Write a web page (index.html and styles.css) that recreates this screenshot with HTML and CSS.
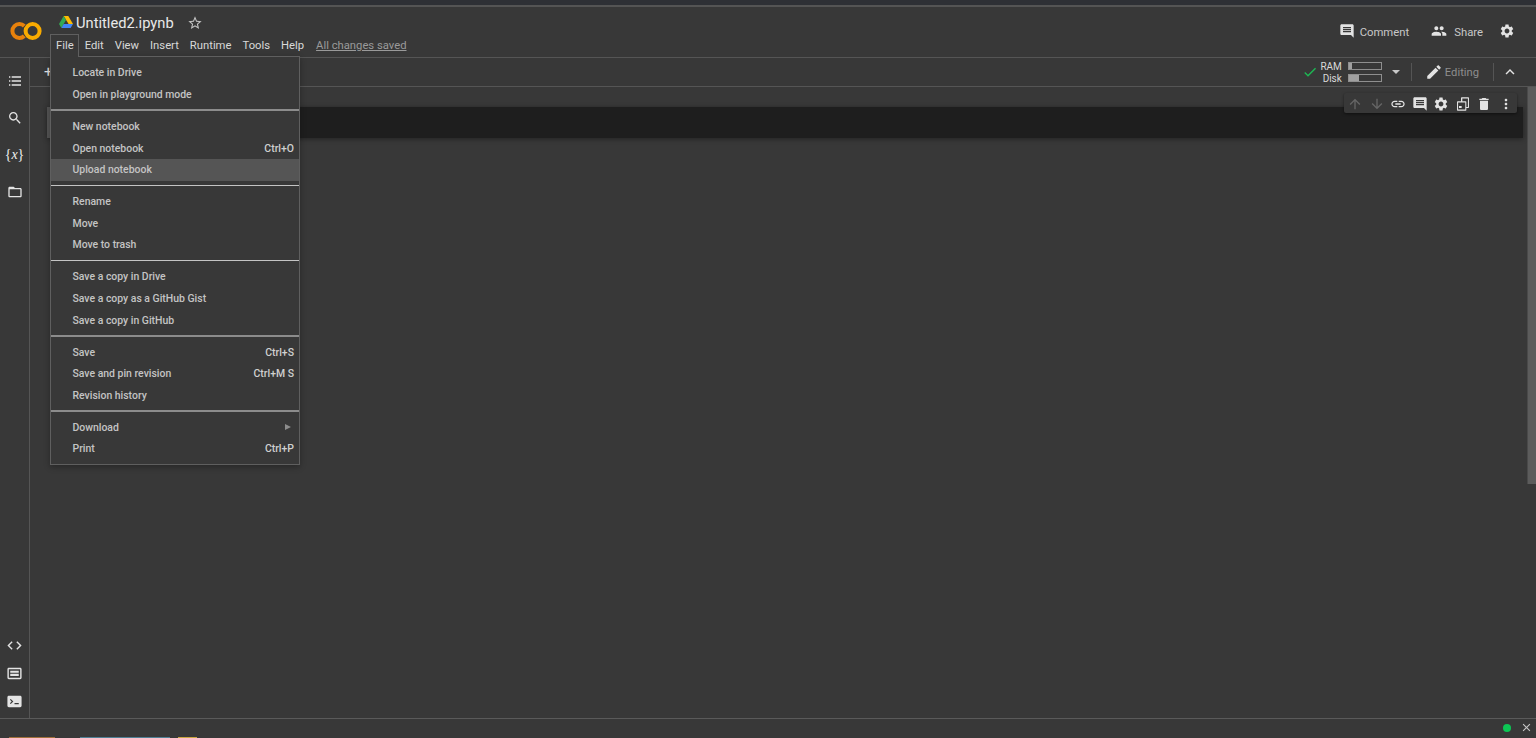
FILE: index.html
```html
<!DOCTYPE html>
<html lang="en">
<head>
    <meta charset="UTF-8">
    <meta name="viewport" content="width=device-width, initial-scale=1.0">
    <title>Untitled2.ipynb - Colaboratory</title>
    <link rel="stylesheet" href="styles.css">
</head>
<body>
    <div class="top-strip"></div>

    <header class="header">
        <svg class="logo" viewBox="0 0 34 20">
            <path d="M15.3 5a7 7 0 1 0 0 10" fill="none" stroke="#e8820c" stroke-width="4"/>
            <circle cx="23.6" cy="10" r="7" fill="none" stroke="#f9ab00" stroke-width="4"/>
        </svg>
        <div class="doc">
            <div class="doc-title">
                <svg class="drive" viewBox="0 0 14 12">
                    <polygon points="4.7,0 9.3,0 14,8 9.6,8" fill="#fbbc04"/>
                    <polygon points="4.7,0 7,4 2.4,12 0,8" fill="#34a853"/>
                    <polygon points="4.6,8 14,8 11.6,12 2.4,12" fill="#4285f4"/>
                </svg>
                <span class="doc-name">Untitled2.ipynb</span>
                <svg class="icon star" viewBox="0 0 24 24"><path d="M22 9.24l-7.19-.62L12 2 9.19 8.63 2 9.24l5.46 4.73L5.82 21 12 17.27 18.18 21l-1.63-7.03L22 9.24zM12 15.4l-3.76 2.27 1-4.28-3.32-2.88 4.38-.38L12 6.1l1.71 4.04 4.38.38-3.32 2.88 1 4.28L12 15.4z"/></svg>
            </div>
            <nav class="menubar">
                <span class="menubar-item active">File</span>
                <span class="menubar-item">Edit</span>
                <span class="menubar-item">View</span>
                <span class="menubar-item">Insert</span>
                <span class="menubar-item">Runtime</span>
                <span class="menubar-item">Tools</span>
                <span class="menubar-item">Help</span>
                <a class="saved">All changes saved</a>
            </nav>
        </div>
        <div class="header-actions">
            <svg class="icon comment-icon" viewBox="0 0 24 24"><path d="M21.99 4c0-1.1-.89-2-1.99-2H4c-1.1 0-2 .9-2 2v12c0 1.1.9 2 2 2h14l4 4-.01-18zM18 14H6v-2h12v2zm0-3H6V9h12v2zm0-3H6V6h12v2z"/></svg>
            <span class="action-label comment-label">Comment</span>
            <svg class="icon people-icon" viewBox="0 0 24 24"><path d="M16 11c1.66 0 2.99-1.34 2.99-3S17.66 5 16 5c-1.66 0-3 1.34-3 3s1.34 3 3 3zm-8 0c1.66 0 2.99-1.34 2.99-3S9.66 5 8 5C6.34 5 5 6.34 5 8s1.34 3 3 3zm0 2c-2.33 0-7 1.17-7 3.5V19h14v-2.5c0-2.33-4.67-3.5-7-3.5zm8 0c-.29 0-.62.02-.97.05 1.16.84 1.97 1.97 1.97 3.45V19h6v-2.5c0-2.33-4.67-3.5-7-3.5z"/></svg>
            <span class="action-label share-label">Share</span>
            <svg class="icon gear-icon" viewBox="0 0 24 24"><path d="M19.14 12.94c.04-.3.06-.61.06-.94 0-.32-.02-.64-.07-.94l2.03-1.58c.18-.14.23-.41.12-.61l-1.92-3.32c-.12-.22-.37-.29-.59-.22l-2.39.96c-.5-.38-1.03-.7-1.62-.94l-.36-2.54c-.04-.24-.24-.41-.48-.41h-3.84c-.24 0-.43.17-.47.41l-.36 2.54c-.59.24-1.13.57-1.62.94l-2.39-.96c-.22-.08-.47 0-.59.22L2.74 8.87c-.12.21-.08.47.12.61l2.03 1.58c-.05.3-.09.63-.09.94s.02.64.07.94l-2.03 1.58c-.18.14-.23.41-.12.61l1.92 3.32c.12.22.37.29.59.22l2.39-.96c.5.38 1.03.7 1.62.94l.36 2.54c.05.24.24.41.48.41h3.84c.24 0 .44-.17.47-.41l.36-2.54c.59-.24 1.13-.56 1.62-.94l2.39.96c.22.08.47 0 .59-.22l1.92-3.32c.12-.22.07-.47-.12-.61l-2.01-1.58zM12 15.6c-1.98 0-3.6-1.62-3.6-3.6s1.62-3.6 3.6-3.6 3.6 1.62 3.6 3.6-1.62 3.6-3.6 3.6z"/></svg>
        </div>
    </header>

    <div class="main">
        <aside class="sidebar">
            <div class="side-group">
                <span class="side-btn"><svg class="icon" viewBox="0 0 24 24"><path d="M7 7h14V5H7v2zm0 6h14v-2H7v2zm0 6h14v-2H7v2zM3 7h2V5H3v2zm0 6h2v-2H3v2zm0 6h2v-2H3v2z"/></svg></span>
                <span class="side-btn"><svg class="icon" viewBox="0 0 24 24"><path d="M15.5 14h-.79l-.28-.27C15.41 12.59 16 11.11 16 9.5 16 5.91 13.09 3 9.5 3S3 5.91 3 9.5 5.91 16 9.5 16c1.61 0 3.09-.59 4.23-1.57l.27.28v.79l5 4.99L20.49 19l-4.99-5zm-6 0C7.01 14 5 11.99 5 9.5S7.01 5 9.5 5 14 7.01 14 9.5 11.99 14 9.5 14z"/></svg></span>
                <span class="side-btn vars">{<i>x</i>}</span>
                <span class="side-btn"><svg class="icon" viewBox="0 0 24 24"><path d="M20 6h-8l-2-2H4c-1.1 0-1.99.9-1.99 2L2 18c0 1.1.9 2 2 2h16c1.1 0 2-.9 2-2V8c0-1.1-.9-2-2-2zm0 12H4V8h16v10z"/></svg></span>
            </div>
            <div class="side-group low">
                <span class="side-btn"><svg class="icon" viewBox="0 0 24 24"><path d="M9.4 16.6L4.8 12l4.6-4.6L8 6l-6 6 6 6 1.4-1.4zm5.2 0l4.6-4.6-4.6-4.6L16 6l6 6-6 6-1.4-1.4z"/></svg></span>
                <span class="side-btn"><svg class="icon" viewBox="0 0 24 24"><path d="M4 4h16c1.1 0 2 .9 2 2v12c0 1.1-.9 2-2 2H4c-1.1 0-2-.9-2-2V6c0-1.1.9-2 2-2zm0 2v12h16V6H4zm2 2h12v3H6V8zm0 4.5h12v3H6v-3z" fill-rule="evenodd"/></svg></span>
                <span class="side-btn"><svg class="icon" viewBox="0 0 24 24"><path d="M4 4h16c1.1 0 2 .9 2 2v12c0 1.1-.9 2-2 2H4c-1.1 0-2-.9-2-2V6c0-1.1.9-2 2-2zm1.5 5.5L8 12l-2.5 2.5 1.2 1.2L10.4 12 6.7 8.3 5.5 9.500zM12 14v2h6v-2h-6z" fill-rule="evenodd"/></svg></span>
            </div>
        </aside>

        <div class="content">
            <div class="toolbar">
                <span class="add-btn">+</span>
                <div class="status">
                    <svg class="icon check" viewBox="0 0 24 24"><path d="M9 16.17L4.83 12l-1.42 1.41L9 19 21 7l-1.41-1.41z"/></svg>
                    <div class="res-labels">
                        <span>RAM</span>
                        <span>Disk</span>
                    </div>
                    <div class="res-bars">
                        <div class="res-bar"><div class="res-fill" style="width: 9%"></div></div>
                        <div class="res-bar"><div class="res-fill" style="width: 33%"></div></div>
                    </div>
                    <span class="caret"></span>
                    <span class="divider"></span>
                    <svg class="icon pencil" viewBox="0 0 24 24"><path d="M3 17.25V21h3.75L17.81 9.94l-3.75-3.75L3 17.25zM20.71 7.04c.39-.39.39-1.02 0-1.41l-2.34-2.34c-.39-.39-1.02-.39-1.41 0l-1.83 1.83 3.75 3.75 1.83-1.83z"/></svg>
                    <span class="editing">Editing</span>
                    <span class="divider second"></span>
                    <svg class="icon chevron" viewBox="0 0 24 24"><path d="M12 8l-6 6 1.41 1.41L12 10.83l4.59 4.58L18 14z"/></svg>
                </div>
            </div>

            <div class="notebook">
                <div class="cells">
                    <div class="cell">
                        <div class="cell-gutter"></div>
                        <div class="cell-body"></div>
                        <div class="cell-tools">
                            <svg class="icon off" viewBox="0 0 24 24"><path d="M4 12l1.41 1.41L11 7.83V20h2V7.83l5.58 5.59L20 12l-8-8-8 8z"/></svg>
                            <svg class="icon off" viewBox="0 0 24 24"><path d="M20 12l-1.41-1.41L13 16.17V4h-2v12.17l-5.58-5.59L4 12l8 8 8-8z"/></svg>
                            <svg class="icon" viewBox="0 0 24 24"><path d="M3.9 12c0-1.71 1.39-3.1 3.1-3.1h4V7H7c-2.76 0-5 2.24-5 5s2.24 5 5 5h4v-1.9H7c-1.71 0-3.1-1.39-3.1-3.1zM8 13h8v-2H8v2zm9-6h-4v1.9h4c1.71 0 3.1 1.39 3.1 3.1s-1.39 3.1-3.1 3.1h-4V17h4c2.76 0 5-2.24 5-5s-2.24-5-5-5z"/></svg>
                            <svg class="icon" viewBox="0 0 24 24"><path d="M21.99 4c0-1.1-.89-2-1.99-2H4c-1.1 0-2 .9-2 2v12c0 1.1.9 2 2 2h14l4 4-.01-18zM18 14H6v-2h12v2zm0-3H6V9h12v2zm0-3H6V6h12v2z"/></svg>
                            <svg class="icon" viewBox="0 0 24 24"><path d="M19.14 12.94c.04-.3.06-.61.06-.94 0-.32-.02-.64-.07-.94l2.03-1.58c.18-.14.23-.41.12-.61l-1.92-3.32c-.12-.22-.37-.29-.59-.22l-2.39.96c-.5-.38-1.03-.7-1.62-.94l-.36-2.54c-.04-.24-.24-.41-.48-.41h-3.84c-.24 0-.43.17-.47.41l-.36 2.54c-.59.24-1.13.57-1.62.94l-2.39-.96c-.22-.08-.47 0-.59.22L2.74 8.87c-.12.21-.08.47.12.61l2.03 1.58c-.05.3-.09.63-.09.94s.02.64.07.94l-2.03 1.58c-.18.14-.23.41-.12.61l1.92 3.32c.12.22.37.29.59.22l2.39-.96c.5.38 1.03.7 1.62.94l.36 2.54c.05.24.24.41.48.41h3.84c.24 0 .44-.17.47-.41l.36-2.54c.59-.24 1.13-.56 1.62-.94l2.39.96c.22.08.47 0 .59-.22l1.92-3.32c.12-.22.07-.47-.12-.61l-2.01-1.58zM12 15.6c-1.98 0-3.6-1.62-3.6-3.6s1.62-3.6 3.6-3.6 3.6 1.62 3.6 3.6-1.62 3.6-3.6 3.6z"/></svg>
                            <svg class="icon" viewBox="0 0 24 24"><path d="M10 2h10a1 1 0 0 1 1 1v14a1 1 0 0 1-1 1h-3v3a1 1 0 0 1-1 1H4a1 1 0 0 1-1-1V9a1 1 0 0 1 1-1h5V3a1 1 0 0 1 1-1zm1 1.6V8h5a1 1 0 0 1 1 1v7.4h2.4V3.6H11zM4.6 9.6v10.8h10.800V9.600H4.600zM6 15h4v3H6v-3z" fill-rule="evenodd"/></svg>
                            <svg class="icon" viewBox="0 0 24 24"><path d="M6 19c0 1.1.9 2 2 2h8c1.1 0 2-.9 2-2V7H6v12zM19 4h-3.5l-1-1h-5l-1 1H5v2h14V4z"/></svg>
                            <svg class="icon" viewBox="0 0 24 24"><path d="M12 8c1.1 0 2-.9 2-2s-.9-2-2-2-2 .9-2 2 .9 2 2 2zm0 2c-1.1 0-2 .9-2 2s.9 2 2 2 2-.9 2-2-.9-2-2-2zm0 6c-1.1 0-2 .9-2 2s.9 2 2 2 2-.9 2-2-.9-2-2-2z"/></svg>
                        </div>
                    </div>
                </div>
                <div class="scrollbar"></div>
            </div>
        </div>
    </div>

    <footer class="footer">
        <span class="conn-dot"></span>
        <svg class="icon close" viewBox="0 0 24 24"><path d="M19 6.41L17.59 5 12 10.59 6.41 5 5 6.41 10.59 12 5 17.59 6.41 19 12 13.41 17.59 19 19 17.59 13.41 12z"/></svg>
        <div class="cut-strip">
            <span class="cut brown"></span>
            <span class="cut blue"></span>
            <span class="cut yellow"></span>
        </div>
    </footer>

    <div class="file-menu">
        <div class="menu-row"><span>Locate in Drive</span></div>
        <div class="menu-row"><span>Open in playground mode</span></div>
        <div class="sep thick"></div>
        <div class="menu-row"><span>New notebook</span></div>
        <div class="menu-row"><span>Open notebook</span><span class="key">Ctrl+O</span></div>
        <div class="menu-row hover"><span>Upload notebook</span></div>
        <div class="sep"></div>
        <div class="menu-row"><span>Rename</span></div>
        <div class="menu-row"><span>Move</span></div>
        <div class="menu-row"><span>Move to trash</span></div>
        <div class="sep"></div>
        <div class="menu-row"><span>Save a copy in Drive</span></div>
        <div class="menu-row"><span>Save a copy as a GitHub Gist</span></div>
        <div class="menu-row"><span>Save a copy in GitHub</span></div>
        <div class="sep thick"></div>
        <div class="menu-row"><span>Save</span><span class="key">Ctrl+S</span></div>
        <div class="menu-row"><span>Save and pin revision</span><span class="key">Ctrl+M S</span></div>
        <div class="menu-row"><span>Revision history</span></div>
        <div class="sep thick"></div>
        <div class="menu-row"><span>Download</span><span class="submenu"></span></div>
        <div class="menu-row"><span>Print</span><span class="key">Ctrl+P</span></div>
    </div>
</body>
</html>
```

FILE: styles.css
```css
* {
    box-sizing: border-box;
}
body {
    margin: 0;
    height: 738px;
    overflow: hidden;
    display: flex;
    flex-direction: column;
    font-family: Roboto, "Liberation Sans", sans-serif;
    background-color: #383838;
    color: #d5d5d5;
}
.icon {
    display: block;
    width: 16px;
    height: 16px;
    fill: #e3e3e3;
    flex: none;
}
.top-strip {
    height: 7px;
    flex: none;
    background-color: #2e3035;
    border-bottom: 2px solid #545454;
}

/* header */
.header {
    height: 51px;
    flex: none;
    display: flex;
    border-bottom: 1px solid #555;
}
.logo {
    width: 34px;
    height: 20px;
    margin: 14px 0 0 9px;
    flex: none;
}
.doc {
    margin-left: 7px;
    display: flex;
    flex-direction: column;
}
.doc-title {
    height: 27px;
    padding: 5px 0 0 9px;
    display: flex;
    align-items: center;
}
.drive {
    width: 14px;
    height: 12px;
    margin-top: -2px;
}
.doc-name {
    margin-left: 3px;
    font-size: 14.7px;
    color: #e8e8e8;
}
.star {
    margin-left: 13px;
    fill: #c4c4c4;
}
.menubar {
    height: 23px;
    display: flex;
    align-items: center;
    font-size: 11.25px;
    color: #d8d8d8;
}
.menubar-item {
    padding: 0 4px 0 5px;
    height: 23px;
    line-height: 22px;
    border: 1px solid transparent;
    border-bottom: 0;
    position: relative;
    z-index: 3;
}
.menubar-item.active {
    background-color: #383838;
    border-color: #5f5f5f;
}
.saved {
    margin-left: 7px;
    color: #9a9a9a;
    text-decoration: underline;
}
.header-actions {
    margin-left: auto;
    padding: 16px 21px 0 0;
    display: flex;
    align-items: flex-start;
    font-size: 11.3px;
    color: #c8c8c8;
}
.action-label {
    line-height: 20px;
}
.comment-label {
    margin-left: 5px;
}
.people-icon {
    margin-left: 22px;
}
.share-label {
    margin-left: 7px;
}
.gear-icon {
    margin-left: 16px;
}

/* left rail and notebook */
.main {
    flex: 1;
    display: flex;
    min-height: 0;
}
.sidebar {
    width: 30px;
    flex: none;
    border-right: 1px solid #555;
    display: flex;
    flex-direction: column;
    justify-content: space-between;
}
.side-group {
    padding-top: 4.5px;
    display: flex;
    flex-direction: column;
}
.side-group.low {
    padding: 0 0 3px;
}
.side-btn {
    height: 37px;
    display: flex;
    align-items: center;
    justify-content: center;
}
.side-group.low .side-btn {
    height: 28px;
}
.side-group.low .icon {
    width: 17px;
    height: 17px;
}
.vars {
    font-family: "Liberation Serif", serif;
    font-size: 14px;
    color: #f0f0f0;
}
.content {
    flex: 1;
    min-width: 0;
    display: flex;
    flex-direction: column;
}
.toolbar {
    height: 29px;
    flex: none;
    display: flex;
    align-items: center;
    border-bottom: 1px solid #555;
}
.add-btn {
    margin-left: 14px;
    font-size: 15px;
    color: #e3e3e3;
}
.status {
    margin-left: auto;
    padding-right: 17px;
    display: flex;
    align-items: center;
}
.check {
    fill: #1db954;
}
.res-labels {
    width: 24px;
    padding-top: 1px;
    display: flex;
    flex-direction: column;
    align-items: flex-end;
    font-size: 10px;
    line-height: 12px;
    color: #d8d8d8;
}
.res-bars {
    margin-left: 6px;
    display: flex;
    flex-direction: column;
    gap: 4px;
}
.res-bar {
    width: 34px;
    height: 8px;
    border: 1px solid #8f8f8f;
    background-color: #383838;
}
.res-fill {
    height: 100%;
    background-color: #a0a0a0;
}
.caret {
    width: 0;
    height: 0;
    margin-left: 10px;
    border-left: 4px solid transparent;
    border-right: 4px solid transparent;
    border-top: 4px solid #c8c8c8;
}
.divider {
    width: 1px;
    height: 18px;
    margin-left: 11px;
    background-color: #555;
}
.divider.second {
    margin-left: 14px;
}
.pencil {
    width: 18px;
    height: 18px;
    margin-left: 13px;
}
.editing {
    margin-left: 2px;
    font-size: 11.2px;
    color: #8e8e8e;
}
.chevron {
    width: 18px;
    height: 18px;
    margin-left: 7px;
}
.notebook {
    flex: 1;
    display: flex;
    min-height: 0;
}
.cells {
    flex: 1;
    min-width: 0;
    padding: 20px 4px 0 17px;
}
.cell {
    position: relative;
    height: 31px;
    display: flex;
    box-shadow: 0 1px 5px rgba(0, 0, 0, 0.4);
}
.cell-gutter {
    width: 5px;
    background-color: #545454;
}
.cell-body {
    flex: 1;
    background-color: #1e1e1e;
}
.cell-tools {
    position: absolute;
    top: -14px;
    right: 6px;
    width: 173px;
    height: 20px;
    display: flex;
    align-items: center;
    gap: 5.5px;
    padding: 1px 0 0 3px;
    background-color: #383838;
    border-radius: 2px;
    box-shadow: 0 1px 3px rgba(0, 0, 0, 0.5);
}
.cell-tools .icon.off {
    fill: #666;
}
.scrollbar {
    width: 9px;
    height: 397px;
    flex: none;
    background-color: #5c5c5c;
    border-left: 1px solid #4a4a4a;
}

/* status bar */
.footer {
    position: relative;
    height: 20px;
    flex: none;
    display: flex;
    align-items: center;
    justify-content: flex-end;
    border-top: 1px solid #5a5a5a;
    padding: 0 3px 2px 0;
}
.conn-dot {
    width: 8px;
    height: 8px;
    border-radius: 50%;
    background-color: #0cc654;
}
.close {
    width: 13px;
    height: 13px;
    margin-left: 9px;
    fill: #c8c8c8;
}
.cut-strip {
    position: absolute;
    left: 0;
    right: 0;
    bottom: 0;
    height: 1px;
    display: flex;
}
.cut {
    display: block;
    height: 1px;
}
.cut.brown {
    width: 46px;
    margin-left: 9px;
    background-color: #a0703a;
}
.cut.blue {
    width: 90px;
    margin-left: 25px;
    background-color: #4f7f94;
}
.cut.yellow {
    width: 19px;
    margin-left: 8px;
    background-color: #c9a640;
}

/* file dropdown */
.file-menu {
    position: absolute;
    top: 56px;
    left: 50px;
    width: 250px;
    height: 409px;
    padding: 5.1px 0 0;
    z-index: 2;
    background-color: #383838;
    border: 1px solid #5f5f5f;
    box-shadow: 0 2px 6px rgba(0, 0, 0, 0.3);
    font-size: 10.45px;
    font-weight: 500;
    color: #c4c4c4;
}
.menu-row {
    height: 21.6px;
    padding: 0 5px 0 21.5px;
    display: flex;
    align-items: center;
    justify-content: space-between;
}
.menu-row.hover {
    background-color: #555;
}
.sep {
    height: 1px;
    margin: 4.7px 0;
    background-color: #c4c4c4;
}
.sep.thick {
    height: 2px;
    margin: 3.9px 0 4.55px;
    background-color: #8c8c8c;
}
.key {
    color: #d0d0d0;
}
.submenu {
    width: 0;
    height: 0;
    margin-right: 3px;
    border-top: 3px solid transparent;
    border-bottom: 3px solid transparent;
    border-left: 6px solid #8c8c8c;
}
```
